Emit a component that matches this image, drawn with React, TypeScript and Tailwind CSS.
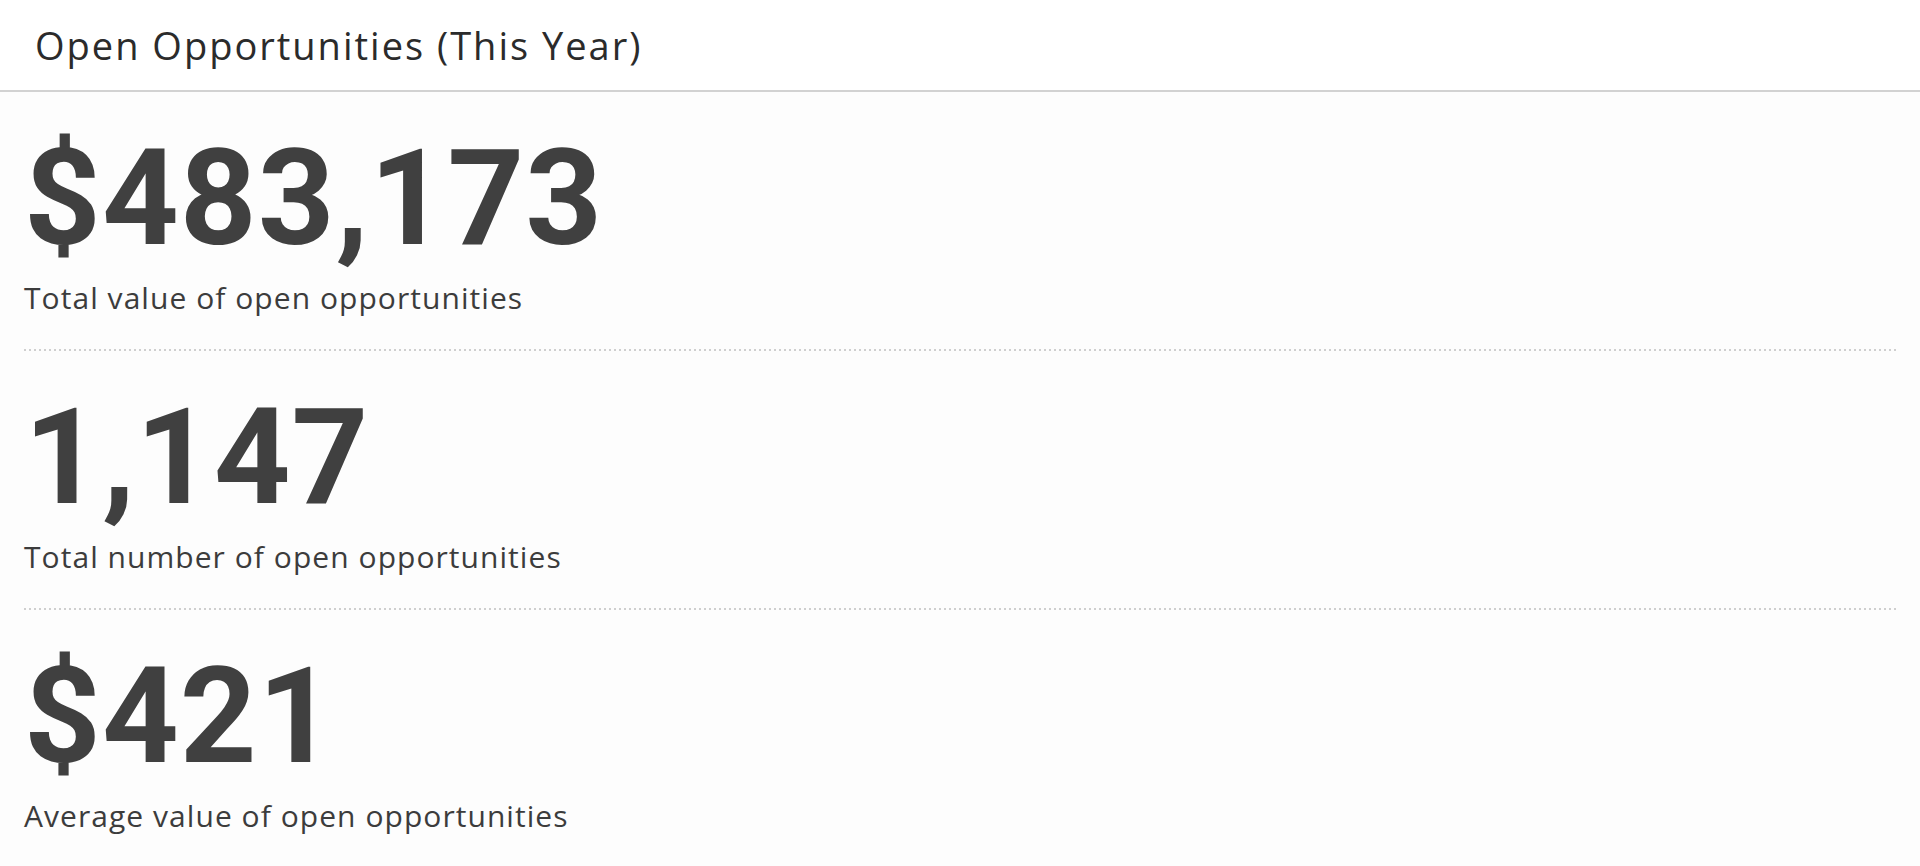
const stats = [
  { value: "$483,173", label: "Total value of open opportunities" },
  { value: "1,147", label: "Total number of open opportunities" },
  { value: "$421", label: "Average value of open opportunities" },
];

const App = () => {
  return (
    <div className="min-h-screen bg-[#fdfdfd] font-['Open_Sans',sans-serif] overflow-hidden">
      {/* header */}
      <div className="bg-white pt-[26px] pb-[26px] pl-[35px] border-b-2 border-[#d2d2d2]">
        <h1 className="text-[38px] leading-[38px] font-normal tracking-[2px] text-[#2b2b2b]">
          Open Opportunities (This Year)
        </h1>
      </div>

      {/* stats */}
      <div className="px-[24px]">
        {stats.map((s, i) => (
          <div key={s.label} className="pt-[38px]">
            <div className="font-['Roboto',sans-serif] text-[134px] leading-[138px] font-bold tracking-[1px] text-[#404040]">
              {s.value}
            </div>
            <div className="mt-[15px] text-[30px] leading-[30px] tracking-[1.05px] text-[#3c3c3c]">
              {s.label}
            </div>
            {i < stats.length - 1 && (
              <div className="mt-[36px] h-[2px] bg-[repeating-linear-gradient(to_right,#cfcfcf_0px,#cfcfcf_2px,transparent_2px,transparent_5px)]" />
            )}
          </div>
        ))}
      </div>
    </div>
  );
};

export default App;
